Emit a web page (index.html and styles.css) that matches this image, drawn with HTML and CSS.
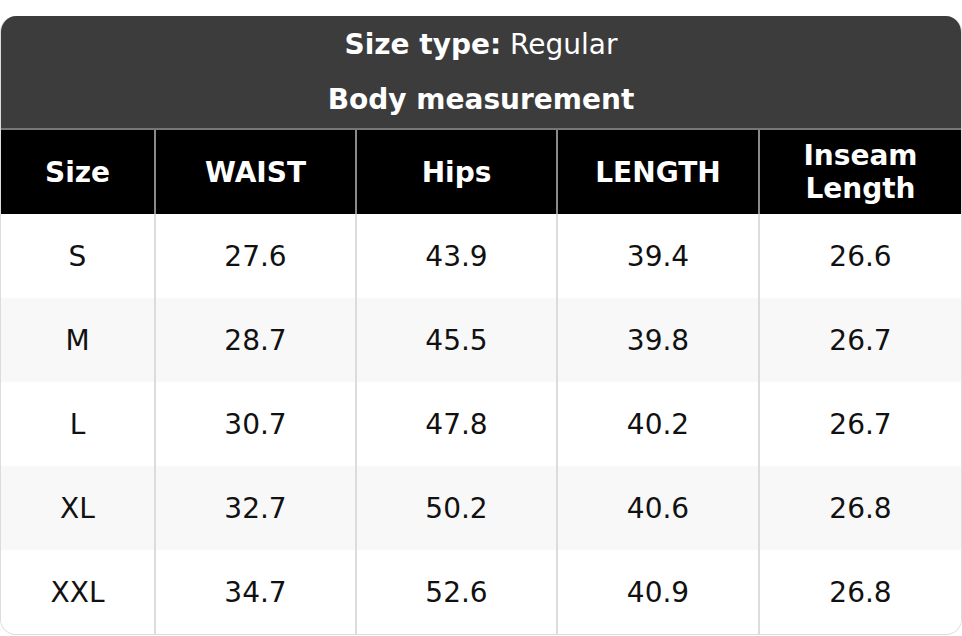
FILE: index.html
```html
<!DOCTYPE html>
<html>
<head>
<meta charset="utf-8">
<link rel="stylesheet" href="styles.css">
</head>
<body>
<div class="card">
  <div class="title">
    <div class="title-row"><b>Size type:</b> Regular</div>
    <div class="title-row"><b>Body measurement</b></div>
  </div>
  <div class="grid head">
    <div class="cell">Size</div>
    <div class="cell">WAIST</div>
    <div class="cell">Hips</div>
    <div class="cell">LENGTH</div>
    <div class="cell">Inseam<br>Length</div>
  </div>
  <div class="grid row">
    <div class="cell">S</div><div class="cell">27.6</div><div class="cell">43.9</div><div class="cell">39.4</div><div class="cell">26.6</div>
  </div>
  <div class="grid row alt">
    <div class="cell">M</div><div class="cell">28.7</div><div class="cell">45.5</div><div class="cell">39.8</div><div class="cell">26.7</div>
  </div>
  <div class="grid row">
    <div class="cell">L</div><div class="cell">30.7</div><div class="cell">47.8</div><div class="cell">40.2</div><div class="cell">26.7</div>
  </div>
  <div class="grid row alt">
    <div class="cell">XL</div><div class="cell">32.7</div><div class="cell">50.2</div><div class="cell">40.6</div><div class="cell">26.8</div>
  </div>
  <div class="grid row">
    <div class="cell">XXL</div><div class="cell">34.7</div><div class="cell">52.6</div><div class="cell">40.9</div><div class="cell">26.8</div>
  </div>
</div>
</body>
</html>
```

FILE: styles.css
```css
html, body {
  margin: 0;
  padding: 0;
  background: #fff;
}
body {
  font-family: "DejaVu Sans", "Liberation Sans", sans-serif;
  font-size: 28px;
  color: #111;
}
.card {
  margin-top: 16px;
  width: 962px;
  box-sizing: border-box;
  border: 1px solid #dcdcdc;
  border-top: none;
  border-radius: 16px;
  overflow: hidden;
}
.title {
  background: #3c3c3c;
  color: #fff;
  text-align: center;
  border-bottom: 2px solid #777;
}
.title-row {
  height: 56px;
  line-height: 56px;
}
.title-row:first-child {
  line-height: 58px;
}
.grid {
  display: grid;
  grid-template-columns: 153px 201px 201px 202px 1fr;
  height: 84px;
}
.cell {
  display: flex;
  align-items: center;
  justify-content: center;
  text-align: center;
  box-sizing: border-box;
}
.cell + .cell {
  border-left: 2px solid #dcdcdc;
}
.head {
  background: #000;
  color: #fff;
  font-weight: bold;
  line-height: 33px;
}
.head .cell + .cell {
  border-left-color: #8a8a8a;
}
.row {
  background: #fff;
}
.row.alt {
  background: #f8f8f8;
}
```
